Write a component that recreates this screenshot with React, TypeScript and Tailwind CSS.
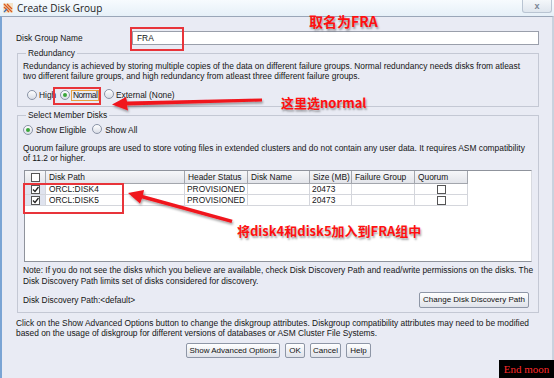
import React from 'react'

const font = { fontFamily: '"Liberation Sans", Arial, sans-serif' }

function Radio({ checked }: { checked?: boolean }) {
  return (
    <span className="inline-flex items-center justify-center w-[10px] h-[10px] rounded-full border border-[#8a93a6] bg-gradient-to-b from-white to-[#d9dde6] shrink-0">
      {checked && <span className="w-[4px] h-[4px] rounded-full bg-[#3aa63a]" />}
    </span>
  )
}

function Check({ checked }: { checked?: boolean }) {
  return (
    <span className="inline-flex items-center justify-center w-[9px] h-[9px] border border-[#555] bg-white shrink-0">
      {checked && (
        <svg width="7" height="7" viewBox="0 0 7 7">
          <path d="M1 3.5 L3 5.5 L6.5 1" stroke="#222" strokeWidth="1.3" fill="none" />
        </svg>
      )}
    </span>
  )
}

function Btn({ label, w }: { label: string; w: string }) {
  return (
    <div
      className={`${w} h-full flex items-center justify-center border border-[#8e96a6] rounded-[2px] bg-gradient-to-b from-white to-[#dfe2ea] text-[8px] text-[#111] whitespace-nowrap`}
    >
      {label}
    </div>
  )
}

const cols = [
  { label: 'Disk Path', w: 'w-[139px]' },
  { label: 'Header Status', w: 'w-[63px]' },
  { label: 'Disk Name', w: 'w-[62px]' },
  { label: 'Size (MB)', w: 'w-[42px]' },
  { label: 'Failure Group', w: 'w-[63px]' },
  { label: 'Quorum', w: 'w-[53px]' },
]

const disks = ['ORCL:DISK4', 'ORCL:DISK5']

const redText = {
  fontFamily: '"Noto Sans CJK SC", sans-serif',
  textShadow: '1px 2px 2px rgba(0,0,0,0.35)',
}

export default function App() {
  return (
    <div className="relative w-[554px] h-[378px] overflow-hidden bg-[#e9ebf4] text-[#151515]" style={font}>
      {/* title bar */}
      <div className="h-[16px] flex items-center bg-gradient-to-b from-[#f7fbfe] to-[#e6f0f8] relative">
        <svg width="10" height="10" viewBox="0 0 10 10" className="ml-[3px]">
          <rect x="0" y="0" width="10" height="10" fill="#f3e3c8" />
          <path d="M1 1 L9 9 M1 4 L6 9 M4 1 L9 6" stroke="#d9591d" strokeWidth="1.4" />
          <path d="M1 9 L4 6" stroke="#3b6fb8" strokeWidth="1.2" />
        </svg>
        <span className="ml-[4px] text-[10px] text-[#222]" style={{ fontFamily: '"Open Sans", "Liberation Sans", sans-serif' }}>
          Create Disk Group
        </span>
        <div className="absolute right-[2px] top-0 w-[30px] h-[13px] border border-t-0 border-[#b9c4d2] rounded-b-[3px] bg-gradient-to-b from-[#f4f7fa] to-[#dfe6ee] flex items-center justify-center">
          <span className="text-[9px] font-bold text-[#7a8494] leading-none">x</span>
        </div>
      </div>

      {/* body */}
      <div className="h-[362px] border-t border-t-[#9aa6b8] border-l-[2px] border-l-[#7aa4d4] border-r-[2px] border-r-[#c9d2de] pl-[14px] pr-[13px] text-[8.4px]">
        {/* name row */}
        <div className="pt-[14px] flex items-center h-[28px]">
          <span className="w-[116px] whitespace-nowrap">Disk Group Name</span>
          <div className="flex-1 h-[14px] border border-[#9a9fab] bg-white flex items-center pl-[4px]">FRA</div>
        </div>

        {/* redundancy */}
        <div className="relative mt-[8px] ml-[1px] border border-[#c4c8d4] pt-[7px] pb-[6px] pl-[5px]">
          <span className="absolute -top-[6px] left-[8px] px-[2px] bg-[#e9ebf4] leading-[10px]">Redundancy</span>
          <div className="leading-[10px] whitespace-nowrap">
            Redundancy is achieved by storing multiple copies of the data on different failure groups. Normal redundancy needs disks from atleast
          </div>
          <div className="leading-[10px] whitespace-nowrap">
            two different failure groups, and high redundancy from atleast three different failure groups.
          </div>
          <div className="mt-[9px] h-[10px] ml-[4px] flex items-center leading-[10px]">
            <Radio />
            <span className="ml-[2px] w-[21px]">High</span>
            <Radio checked />
            <span className="ml-[1px] w-[28px] pl-[1px] border border-[#e8a040] leading-[9px] whitespace-nowrap tracking-[-0.45px]">
              Normal
            </span>
            <span className="ml-[5px]">
              <Radio />
            </span>
            <span className="ml-[2px]">External (None)</span>
          </div>
        </div>

        {/* member disks */}
        <div className="relative mt-[8px] ml-[1px] border border-[#c4c8d4] pt-[9px] pb-[4px] pl-[5px] pr-[6px]">
          <span className="absolute -top-[6px] left-[8px] px-[2px] bg-[#e9ebf4] leading-[10px]">Select Member Disks</span>
          <div className="h-[10px] flex items-center leading-[10px]">
            <Radio checked />
            <span className="ml-[3px]">Show Eligible</span>
            <span className="ml-[6px]">
              <Radio />
            </span>
            <span className="ml-[3px]">Show All</span>
          </div>
          <div className="mt-[8px] leading-[10px] whitespace-nowrap">
            Quorum failure groups are used to store voting files in extended clusters and do not contain any user data. It requires ASM compatibility
          </div>
          <div className="leading-[10px]">of 11.2 or higher.</div>

          {/* table */}
          <div className="mt-[7px] ml-[1px] h-[92px] bg-white border-l border-t border-b border-[#8f939c] border-r border-r-[#d8dae0]">
            <div className="flex h-[13px]">
              <div className="w-[21px] h-full flex items-center justify-center bg-gradient-to-b from-[#f6f7f9] to-[#e3e5ea] border-r border-b border-[#a3a6ad]">
                <Check />
              </div>
              {cols.map((c) => (
                <div
                  key={c.label}
                  className={`${c.w} h-full flex items-center pl-[3px] bg-gradient-to-b from-[#f6f7f9] to-[#e3e5ea] border-r border-b border-[#a3a6ad] whitespace-nowrap`}
                >
                  {c.label}
                </div>
              ))}
            </div>
            {disks.map((d) => (
              <div key={d} className="flex h-[11px]">
                <div className="w-[21px] h-full flex items-center justify-center bg-[#dfe3ee] border-r border-b border-[#d4d6dc]">
                  <Check checked />
                </div>
                <div className="w-[139px] h-full flex items-center pl-[3px] border-r border-b border-[#d4d6dc]">{d}</div>
                <div className="w-[63px] h-full flex items-center pl-[2px] border-r border-b border-[#d4d6dc]">PROVISIONED</div>
                <div className="w-[62px] h-full border-r border-b border-[#d4d6dc]" />
                <div className="w-[42px] h-full flex items-center pl-[2px] border-r border-b border-[#d4d6dc]">20473</div>
                <div className="w-[63px] h-full border-r border-b border-[#d4d6dc]" />
                <div className="w-[53px] h-full flex items-center justify-center border-r border-b border-[#d4d6dc]">
                  <Check />
                </div>
              </div>
            ))}
          </div>

          <div className="mt-[3px] leading-[11px] whitespace-nowrap">
            Note: If you do not see the disks which you believe are available, check Disk Discovery Path and read/write permissions on the disks. The
          </div>
          <div className="leading-[11px] whitespace-nowrap">Disk Discovery Path limits set of disks considered for discovery.</div>
          <div className="mt-[5px] h-[16px] flex items-center justify-between pr-[3px]">
            <span>Disk Discovery Path:&lt;default&gt;</span>
            <Btn label="Change Disk Discovery Path" w="w-[110px]" />
          </div>
        </div>

        <div className="mt-[5px] leading-[10px] whitespace-nowrap">
          Click on the Show Advanced Options button to change the diskgroup attributes. Diskgroup compatibility attributes may need to be modified
        </div>
        <div className="leading-[10px] whitespace-nowrap">
          based on the usage of diskgroup for different versions of databases or ASM Cluster File Systems.
        </div>
        <div className="mt-[5px] h-[15px] flex justify-center gap-[5px] pl-[2px]">
          <Btn label="Show Advanced Options" w="w-[94px]" />
          <Btn label="OK" w="w-[20px]" />
          <Btn label="Cancel" w="w-[31px]" />
          <Btn label="Help" w="w-[25px]" />
        </div>
      </div>

      {/* annotations */}
      <div className="absolute left-[130px] top-[27px] w-[54px] h-[24px] border-[2px] border-[#e8343a] pointer-events-none" />
      <div className="absolute left-[53px] top-[87px] w-[48px] h-[18px] border-[2px] border-[#e8343a] pointer-events-none" />
      <div className="absolute left-[23px] top-[183px] w-[101px] h-[31px] border-[2px] border-[#e8343a] pointer-events-none" />
      <svg className="absolute left-0 top-0 pointer-events-none" width="554" height="378" viewBox="0 0 554 378">
        <defs>
          <filter id="sh" x="-20%" y="-20%" width="140%" height="160%">
            <feDropShadow dx="1" dy="2" stdDeviation="1.2" floodColor="#000" floodOpacity="0.35" />
          </filter>
        </defs>
        <g filter="url(#sh)" fill="#f0141e">
          <polygon points="262,98.5 262,101.5 127,105.5 128,110.5 112,104.5 126,97 127,101.5" />
          <polygon points="232.5,219.8 231.5,223 142,198.5 140,203.5 128,193 144,190 143,195" />
        </g>
      </svg>
      <div className="absolute left-[309px] top-[14px] text-[14px] font-bold text-[#ff1010] leading-none pointer-events-none" style={redText}>
        取名为FRA
      </div>
      <div className="absolute left-[281px] top-[96px] text-[13px] font-bold text-[#ff1010] leading-none pointer-events-none" style={redText}>
        这里选normal
      </div>
      <div className="absolute left-[237px] top-[224px] text-[13px] font-bold text-[#ff1010] leading-none whitespace-nowrap pointer-events-none" style={redText}>
        将disk4和disk5加入到FRA组中
      </div>
      <div
        className="absolute right-0 bottom-0 w-[55px] h-[18px] bg-black flex items-center justify-center text-[11px] text-[#ff2a2a]"
        style={{ fontFamily: '"Liberation Serif", serif' }}
      >
        End moon
      </div>
    </div>
  )
}
